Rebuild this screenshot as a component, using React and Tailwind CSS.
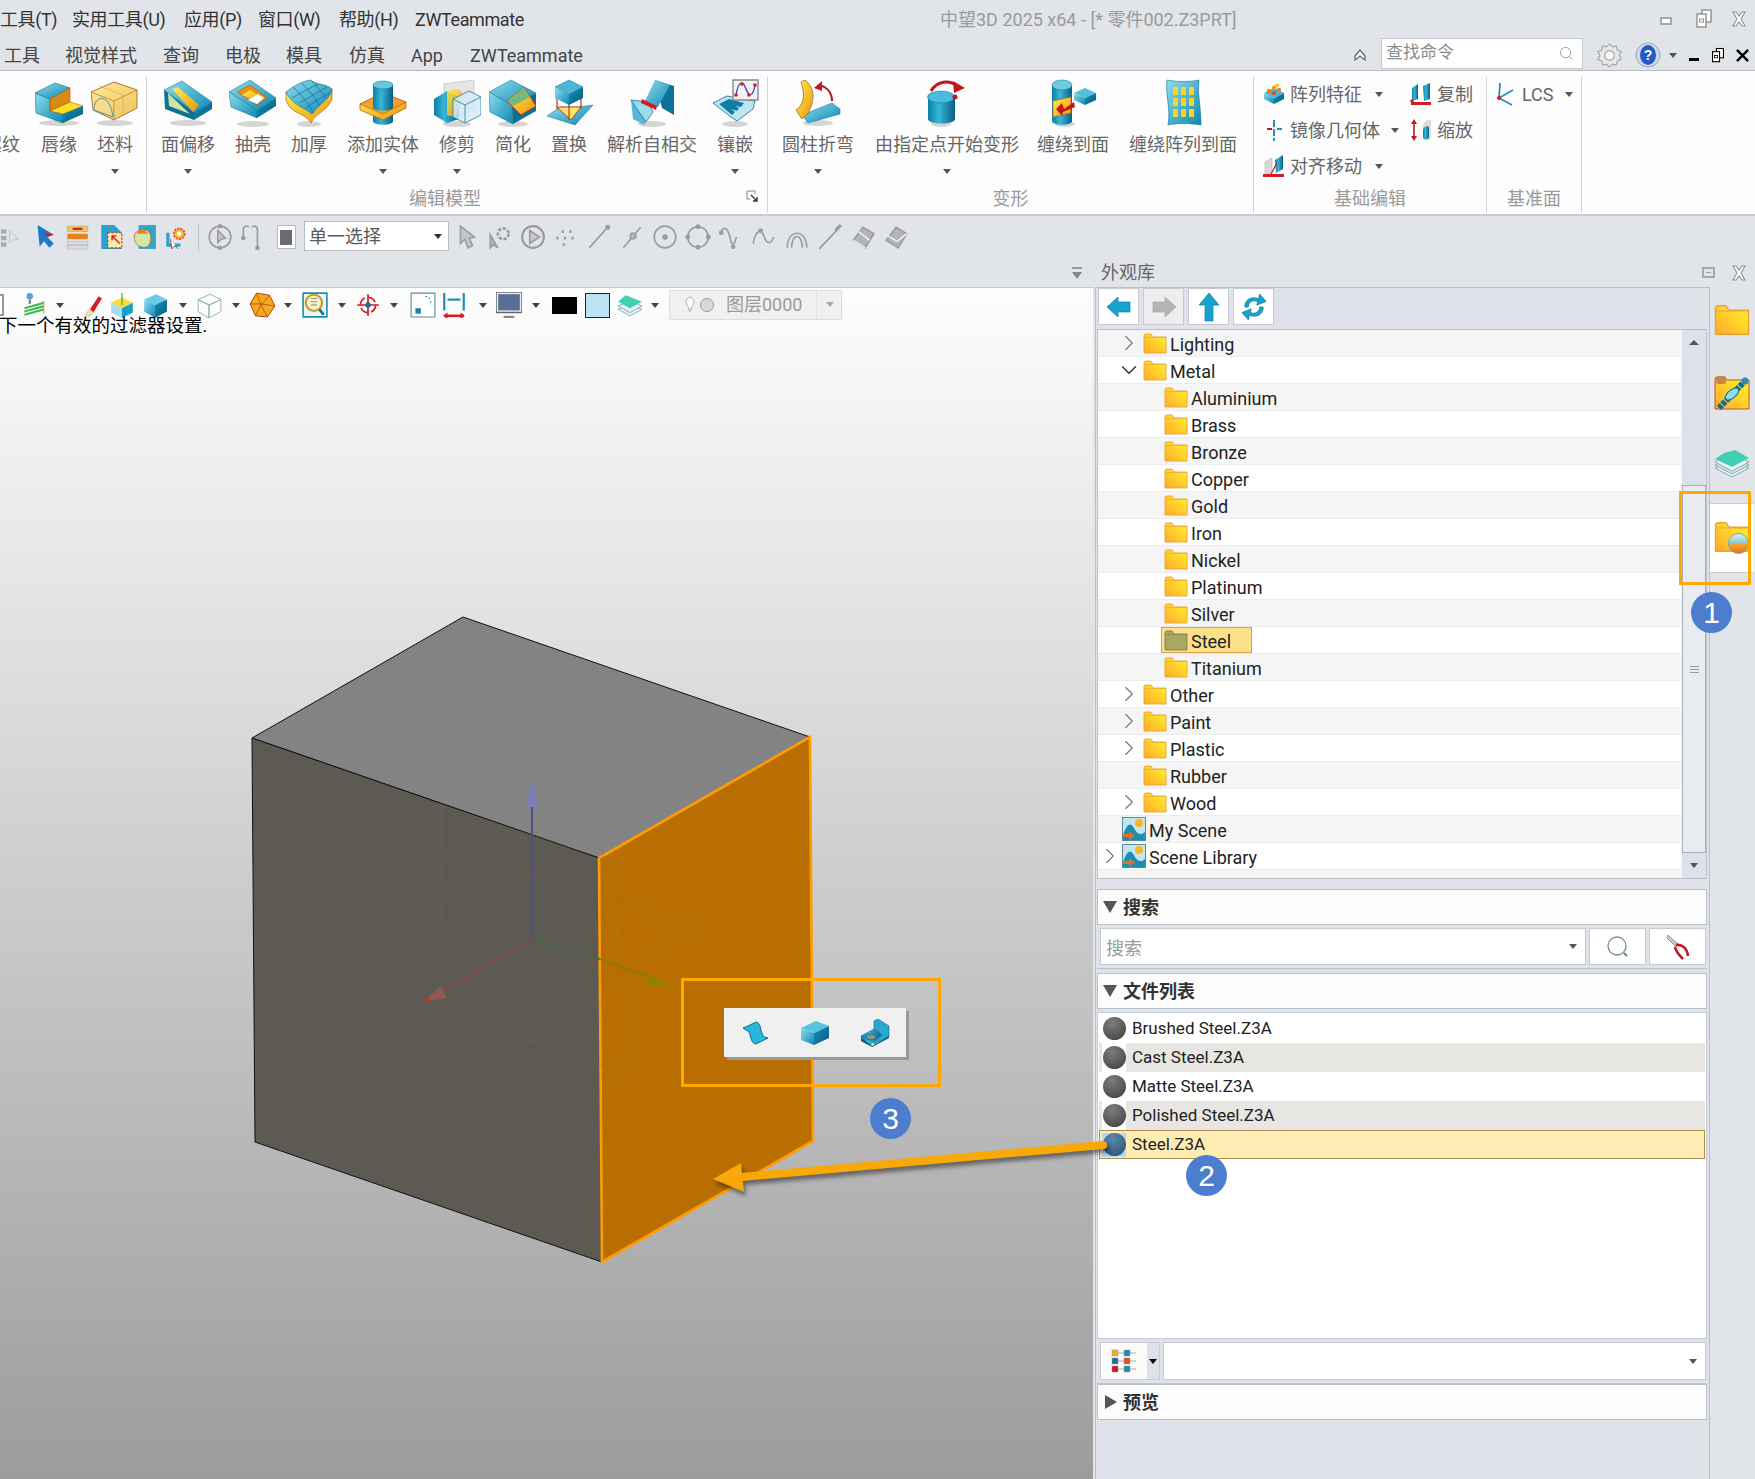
import { ChevronRight, ChevronDown } from 'lucide-react';

const Defs = () => (
  <svg className="absolute w-0 h-0">
    <defs>
      <linearGradient id="t" x1="0" y1="0" x2="1" y2="1">
        <stop offset="0" stopColor="#8fdcee" />
        <stop offset="1" stopColor="#0b89b3" />
      </linearGradient>
      <linearGradient id="td" x1="0" y1="0" x2="1" y2="1">
        <stop offset="0" stopColor="#1592b8" />
        <stop offset="1" stopColor="#07597c" />
      </linearGradient>
      <linearGradient id="cy" x1="0" y1="0" x2="1" y2="0">
        <stop offset="0" stopColor="#0a7ea6" />
        <stop offset="0.4" stopColor="#38b6d8" />
        <stop offset="1" stopColor="#075f82" />
      </linearGradient>
      <linearGradient id="g" x1="0" y1="0" x2="1" y2="1">
        <stop offset="0" stopColor="#fff04a" />
        <stop offset="1" stopColor="#ee9510" />
      </linearGradient>
      <linearGradient id="gl" x1="0" y1="0" x2="1" y2="1">
        <stop offset="0" stopColor="#fdeb98" />
        <stop offset="1" stopColor="#f0c458" />
      </linearGradient>
      <linearGradient id="f" x1="0" y1="1" x2="1" y2="0">
        <stop offset="0" stopColor="#ffa92b" />
        <stop offset="0.55" stopColor="#ffd32a" />
        <stop offset="1" stopColor="#fff42e" />
      </linearGradient>
    </defs>
  </svg>
);

const Ico = ({ children, size = 'w-[48px] h-[48px]', box = '0 0 48 48' }) => (
  <svg viewBox={box} className={`${size} shrink-0`} strokeLinejoin="round">
    {children}
  </svg>
);

const Shadow = ({ cx = 24, cy = 45, rx = 16 }) => <ellipse cx={cx} cy={cy} rx={rx} ry="3" fill="#777" opacity="0.3" />;

const LipIcon = () => (
  <Ico>
    <Shadow cy={44} rx={20} />
    <path d="M0 14L20 4L35 9L15 20Z" fill="url(#t)" stroke="#0b6f93" strokeWidth="0.6" />
    <path d="M0 14L15 20L15 32L28 35L28 44L1 34Z" fill="url(#t)" stroke="#0b6f93" strokeWidth="0.6" />
    <path d="M15 20L35 9L35 23L15 32Z" fill="#d98a12" stroke="#b5511e" strokeWidth="0.6" />
    <path d="M15 32L35 23L48 27L28 35Z" fill="#ffe01e" stroke="#b5511e" strokeWidth="0.6" />
    <path d="M28 35L48 27L48 35L28 44Z" fill="url(#td)" />
  </Ico>
);

const StockIcon = () => (
  <Ico>
    <Shadow cy={44} rx={18} />
    <path d="M23 3L46 11L46 29L23 41L2 31L0 13Z" fill="url(#gl)" stroke="#b5602a" strokeWidth="0.9" />
    <path d="M0 13L23 22L46 11M23 22L23 41" fill="none" stroke="#c07a38" strokeWidth="0.8" />
    <path d="M8 7L32 16L32 34" fill="none" stroke="#d9a860" strokeWidth="0.7" />
    <path d="M3 31C3 15 19 14 22 38M3 31L22 38" fill="#f6df9a" fillOpacity="0.6" stroke="#3f9aa8" strokeWidth="1" />
  </Ico>
);

const OffsetIcon = () => (
  <Ico>
    <Shadow cy={44} rx={18} />
    <path d="M18 2L48 23L30 33L0 11Z" fill="url(#t)" stroke="#0b6f93" strokeWidth="0.5" />
    <path d="M0 11L30 33L30 41L1 30Z" fill="#0d7095" />
    <path d="M4 14L5 27L26 35Z" fill="#cfe3a0" />
    <path d="M8 10L14 8L35 26L29 33Z" fill="url(#g)" />
    <path d="M30 33L48 23L48 30L30 41Z" fill="url(#td)" />
  </Ico>
);

const ShellIcon = () => (
  <Ico>
    <Shadow cy={45} rx={16} />
    <path d="M21 1L47 19L28 31L0 13Z" fill="url(#t)" stroke="#0b6f93" strokeWidth="0.5" />
    <path d="M8 13L21 6L38 19L28 26Z" fill="#e8900f" stroke="#b5511e" strokeWidth="0.6" />
    <path d="M13 16L21 11L34 19L28 23Z" fill="url(#g)" />
    <path d="M19 21L29 15L35 19L28 25Z" fill="#fff" />
    <path d="M0 13L28 31L28 39L2 28Z" fill="url(#t)" stroke="#0b6f93" strokeWidth="0.5" />
    <path d="M28 31L47 19L47 27L28 39Z" fill="url(#td)" />
  </Ico>
);

const ThickenIcon = () => (
  <Ico>
    <Shadow cy={45} rx={12} />
    <path d="M1 13L1 21C6 36 20 33 26 44C31 33 42 33 47 20L47 10Z" fill="url(#g)" stroke="#c2571c" strokeWidth="0.7" />
    <path d="M1 13C10 6 18 2 26 1C30 6 40 4 47 10C46 19 36 23 27 35C19 28 7 26 1 13Z" fill="url(#t)" stroke="#0b6f93" strokeWidth="0.6" />
    <path d="M8 8C16 16 24 24 28 34M17 4C24 12 32 20 34 27M27 2C32 8 38 14 41 19M7 19C16 14 26 8 34 5M14 24C24 19 32 13 42 8M21 29C28 24 36 18 45 14" fill="none" stroke="#0c6d90" strokeWidth="0.7" />
  </Ico>
);

const AddSolidIcon = () => (
  <Ico>
    <path d="M14 30H34V42C34 47 14 47 14 42Z" fill="url(#cy)" />
    <path d="M1 25L24 14L47 23L47 29L24 41L1 31Z" fill="url(#g)" stroke="#b5511e" strokeWidth="0.7" />
    <path d="M1 25L24 35L47 23L24 14Z" fill="#f1a22a" stroke="#b5511e" strokeWidth="0.6" />
    <path d="M14 6H34V28C34 33 14 33 14 28Z" fill="url(#cy)" />
    <ellipse cx="24" cy="6" rx="10" ry="4" fill="#67c8e2" stroke="#0b6f93" strokeWidth="0.5" />
  </Ico>
);

const TrimIcon = () => (
  <Ico>
    <Shadow cy={45} rx={14} />
    <path d="M11 5L41 1L41 30L12 45Z" fill="#d6d6d6" fillOpacity="0.6" stroke="#b5b5b5" strokeWidth="0.6" />
    <path d="M1 20L14 12L26 18L26 40L14 44L1 36Z" fill="url(#cy)" />
    <path d="M14 12C22 8 28 10 30 16L22 38L14 36Z" fill="url(#g)" opacity="0.85" />
    <path d="M20 20L36 12L48 18L48 36L32 44L20 38Z" fill="#d4eaf4" fillOpacity="0.85" stroke="#1f7ea0" strokeWidth="0.8" />
    <path d="M20 20L32 26L48 18M32 26L32 44" fill="none" stroke="#1f7ea0" strokeWidth="0.8" />
  </Ico>
);

const SimplifyIcon = () => (
  <Ico>
    <Shadow cy={45} rx={15} />
    <path d="M22 1L47 14L23 26L0 13Z" fill="url(#t)" stroke="#0b6f93" strokeWidth="0.5" />
    <path d="M0 13L23 26L24 45L1 33Z" fill="url(#t)" stroke="#0b6f93" strokeWidth="0.5" />
    <path d="M23 26L47 14L47 32L24 45Z" fill="#0c6f95" />
    <path d="M18 22L35 8L47 27L32 36Z" fill="url(#g)" stroke="#c1381c" strokeWidth="0.9" />
    <path d="M18 22L35 8L41 18L24 27Z" fill="#78b878" />
  </Ico>
);

const ReplaceIcon = () => (
  <Ico>
    <path d="M2 37L15 28L33 28L48 26L30 46Z" fill="url(#t)" stroke="#0b6f93" strokeWidth="0.5" />
    <path d="M12 28L36 28L26 41Z" fill="#ffe46a" stroke="#c1381c" strokeWidth="0.9" />
    <path d="M12 19V30M36 19V30M24 24V41" stroke="#c1381c" strokeWidth="1.2" />
    <path d="M24 1L38 8L24 15L10 8Z" fill="#4cb8d8" stroke="#0b6f93" strokeWidth="0.5" />
    <path d="M10 8L24 15V26L10 19Z" fill="url(#t)" />
    <path d="M24 15L38 8V19L24 26Z" fill="url(#td)" />
  </Ico>
);

const AnalyzeIcon = () => (
  <Ico size="w-[44px] h-[48px]" box="0 0 44 48">
    <Shadow cx={22} cy={45} rx={14} />
    <path d="M25 1L44 7V36L32 29Z" fill="#0c7197" />
    <path d="M25 1L40 6L28 28L15 22Z" fill="url(#t)" />
    <path d="M1 21L18 23L16 43Z" fill="#16789c" />
    <path d="M1 21L16 43L14 46L3 40Z" fill="#58b7d2" />
    <path d="M1 21L18 23L23 33L16 43Z" fill="#9bdcea" stroke="#0b6f93" strokeWidth="0.7" />
    <path d="M12 20L27 27L26 31L11 24Z" fill="#d8192a" />
  </Ico>
);

const InlayIcon = () => (
  <Ico>
    <Shadow cy={45} rx={13} />
    <path d="M2 24L16 17L32 20L44 22L42 30L26 42L20 38Z" fill="#bfe5ef" stroke="#1c7fa3" strokeWidth="0.9" />
    <path d="M8 25L18 20L33 24L30 28L24 27L28 29L26 32L20 30L24 33L21 36Z" fill="#0f7ea6" />
    <rect x="22" y="1" width="25" height="20" fill="#f2f2f2" stroke="#888" strokeWidth="1.4" />
    <path d="M25 16C28 0 32 2 35 10C38 18 42 18 44 6" fill="none" stroke="#2b3fb3" strokeWidth="1.3" />
    <circle cx="25" cy="16" r="1.8" fill="#d31c24" />
    <circle cx="31" cy="5" r="1.8" fill="#d31c24" />
    <circle cx="38" cy="16" r="1.8" fill="#d31c24" />
    <circle cx="44" cy="6" r="1.8" fill="#d31c24" />
  </Ico>
);

const BendIcon = () => (
  <Ico>
    <Shadow cx={24} cy={44} rx={15} />
    <path d="M8 36L38 24L46 30L46 35L14 44Z" fill="url(#t)" stroke="#0b6f93" strokeWidth="0.5" />
    <path d="M11 1C20 8 22 20 14 34L8 40L2 31C12 24 10 12 7 3Z" fill="url(#g)" stroke="#a8671a" strokeWidth="0.8" />
    <path d="M25 6C33 8 38 14 38 22" fill="none" stroke="#b71c25" strokeWidth="2.2" />
    <path d="M20 9L28 2L28 12Z" fill="#b71c25" />
  </Ico>
);

const DeformIcon = () => (
  <Ico>
    <Shadow cx={18} cy={45} rx={10} />
    <path d="M5 18H32V40C32 46 5 46 5 40Z" fill="url(#cy)" />
    <ellipse cx="18" cy="18" rx="13.5" ry="6" fill="#49bcdc" stroke="#0b6f93" strokeWidth="0.5" />
    <path d="M8 12C14 2 26 0 36 8" fill="none" stroke="#c4161f" strokeWidth="3" />
    <path d="M30 2L42 9L31 14Z" fill="#c4161f" />
    <circle cx="32" cy="18" r="2.5" fill="#c4161f" />
  </Ico>
);

const WrapIcon = () => (
  <Ico>
    <Shadow cx={16} cy={45} rx={10} />
    <path d="M3 6H23V42C23 47 3 47 3 42Z" fill="url(#cy)" />
    <ellipse cx="13" cy="6" rx="10" ry="5" fill="#6bcbe3" stroke="#0b6f93" strokeWidth="0.5" />
    <path d="M4 22L22 18L22 34L4 38Z" fill="url(#g)" stroke="#c2571c" strokeWidth="0.6" />
    <path d="M25 23L15 30L13 24L7 30L13 37L14 33L26 28Z" fill="#c4161f" />
    <path d="M36 9L47 14L36 19L25 14Z" fill="#58bedb" />
    <path d="M25 14L36 19V26L25 21Z" fill="url(#t)" />
    <path d="M36 19L47 14V21L36 26Z" fill="url(#td)" />
  </Ico>
);

const WrapArrayIcon = () => (
  <Ico size="w-[40px] h-[48px]" box="0 0 40 48">
    <path d="M4 1C14 3 28 3 36 1C34 14 38 26 38 46C26 44 14 44 5 46C8 30 2 14 4 1Z" fill="url(#t)" stroke="#0b6f93" strokeWidth="0.6" />
    {[10, 18, 26].map((x) =>
      [12, 23, 34].map((y) => <rect key={`${x}-${y}`} x={x} y={y - 4} width="5" height="8" fill="#ffd21f" />)
    )}
  </Ico>
);

const ArrayIcon = () => (
  <Ico size="w-[24px] h-[24px]" box="0 0 24 24">
    <path d="M2 11L12 6L22 11L12 16Z" fill="#48b6d6" />
    <path d="M2 11L12 16V22L2 17Z" fill="url(#t)" />
    <path d="M12 16L22 11V17L12 22Z" fill="url(#td)" />
    <circle cx="7" cy="9" r="2.2" fill="#e8821c" /><circle cx="12" cy="6" r="2.2" fill="#f0a020" /><circle cx="17" cy="8" r="2.2" fill="#e8821c" />
    <circle cx="12" cy="11" r="2.2" fill="#d9541e" /><circle cx="15" cy="3.5" r="2" fill="#ffc22e" />
  </Ico>
);

const MirrorIcon = () => (
  <Ico size="w-[24px] h-[24px]" box="0 0 24 24">
    <path d="M12 2V23" stroke="#2b8db0" strokeWidth="2" strokeDasharray="7 2" />
    <path d="M5 11H10" stroke="#c4161f" strokeWidth="2" />
    <path d="M15 11H20" stroke="#2b8db0" strokeWidth="2" />
  </Ico>
);

const AlignIcon = () => (
  <Ico size="w-[24px] h-[24px]" box="0 0 24 24">
    <path d="M3 8L10 4V18L3 21Z" fill="#d8d8d8" stroke="#aaa" strokeWidth="0.5" />
    <path d="M13 6L21 1V15L14 19Z" fill="url(#cy)" />
    <path d="M9 20L15 9" stroke="#c4161f" strokeWidth="1.2" />
    <path d="M1 20H22V23H1Z" fill="#d31c24" />
  </Ico>
);

const CopyIcon = () => (
  <Ico size="w-[24px] h-[24px]" box="0 0 24 24">
    <path d="M3 6L9 2V17L3 19Z" fill="url(#cy)" />
    <path d="M14 4L21 1V17L15 19Z" fill="url(#cy)" />
    <path d="M2 20H22V23H2Z" fill="#d31c24" />
    <circle cx="3" cy="19" r="1.8" fill="#d31c24" />
  </Ico>
);

const ScaleIcon = () => (
  <Ico size="w-[24px] h-[24px]" box="0 0 24 24">
    <path d="M5 5V20" stroke="#c4161f" strokeWidth="1.6" />
    <path d="M5 1L8 6H2ZM5 23L8 18H2Z" fill="#c4161f" />
    <path d="M14 8C14 3 22 0 22 3V19C22 23 14 24 14 20Z" fill="#dcdcdc" />
    <path d="M14 12C14 8 20 7 20 10V19C20 22 14 22 14 19Z" fill="url(#cy)" />
  </Ico>
);

const LcsIcon = () => (
  <Ico size="w-[22px] h-[24px]" box="0 0 22 24">
    <path d="M3 16L4 1M3 16L17 8M3 16L16 23" fill="none" stroke="#2b8db0" strokeWidth="1.8" />
    <circle cx="3" cy="16" r="2" fill="#d31c24" />
  </Ico>
);

const Caret = ({ color = 'border-t-[#555]' }) => (
  <span className={`inline-block w-0 h-0 border-x-[4px] border-x-transparent border-t-[5px] ${color}`} />
);

const XGlyph = ({ size = 'w-[18px] h-[18px]' }) => (
  <svg viewBox="0 0 18 18" className={size}>
    <path d="M3 2L6 2L9 6L12 2L15 2L11 9L15 16L12 16L9 12L6 16L3 16L7 9Z" fill="#fff" stroke="#8f8f8f" strokeWidth="1.1" />
  </svg>
);

const RestoreGlyph = ({ stroke = '#8f8f8f', size = 'w-[18px] h-[20px]' }) => (
  <svg viewBox="0 0 18 20" className={size}>
    <rect x="7" y="1" width="9" height="12" fill="#fff" stroke={stroke} strokeWidth="1.4" />
    <rect x="2" y="5" width="9" height="13" fill="#fff" stroke={stroke} strokeWidth="1.4" />
    <rect x="4.5" y="10" width="4" height="3" fill="none" stroke={stroke} />
  </svg>
);

function TitleBar() {
  const menus = [
    ['工具(T)', 'w-[72px]'],
    ['实用工具(U)', 'w-[112px]'],
    ['应用(P)', 'w-[74px]'],
    ['窗口(W)', 'w-[81px]'],
    ['帮助(H)', 'w-[76px]'],
    ['ZWTeammate', 'w-[115px]'],
  ];
  return (
    <div className="h-[36px] pt-[2px] flex items-center text-[18px] text-[#333]">
      {menus.map(([m, w]) => (
        <div key={m} className={`${w} whitespace-nowrap tracking-[-0.4px]`}>{m}</div>
      ))}
      <div className="ml-[410px] w-[700px] text-[#9a9a9a] whitespace-nowrap">中望3D 2025 x64 - [* 零件002.Z3PRT]</div>
      <div className="w-[12px] h-[8px] border-2 border-[#a8a8a8] bg-white mt-[4px] ml-[20px]" />
      <div className="ml-[23px]"><RestoreGlyph /></div>
      <div className="ml-[17px]"><XGlyph /></div>
    </div>
  );
}

function TabRow() {
  const tabs = [
    ['工具', 'w-[61px]'],
    ['视觉样式', 'w-[98px]'],
    ['查询', 'w-[62px]'],
    ['电极', 'w-[61px]'],
    ['模具', 'w-[63px]'],
    ['仿真', 'w-[62px]'],
    ['App', 'w-[59px]'],
    ['ZWTeammate', 'w-[115px]'],
  ];
  return (
    <div className="h-[35px] pt-[4px] flex items-center text-[18px] text-[#444] border-b border-[#b4bac1]">
      <div className="w-[4px]" />
      {tabs.map(([m, w]) => (
        <div key={m} className={`${w} whitespace-nowrap`}>{m}</div>
      ))}
      <svg viewBox="0 0 14 14" className="w-[14px] h-[14px] ml-[768px]">
        <path d="M2 12V8L7 2L12 8V12L7 8Z" fill="#fff" stroke="#666" strokeWidth="1.3" />
      </svg>
      <div className="ml-[14px] w-[202px] h-[31px] -mt-[4px] bg-white border border-[#c3c8ce] flex items-center justify-between pl-[4px] pr-[8px]">
        <span className="text-[17px] text-[#8a8a8a]">查找命令</span>
        <svg viewBox="0 0 16 16" className="w-[15px] h-[15px]">
          <circle cx="7" cy="7" r="5.5" fill="none" stroke="#999" />
          <path d="M11 11L14 14" stroke="#6aa" />
        </svg>
      </div>
      <svg viewBox="0 0 26 26" className="w-[25px] h-[25px] ml-[14px]">
        <path d="M13 1L16 4L20 3L21 7L25 9L23 13L25 17L21 19L20 23L16 22L13 25L10 22L6 23L5 19L1 17L3 13L1 9L5 7L6 3L10 4Z" fill="#e8e8e8" stroke="#a5a5a5" strokeWidth="1.2" />
        <circle cx="13" cy="13" r="5" fill="#f6f6f6" stroke="#a5a5a5" strokeWidth="1.2" />
      </svg>
      <svg viewBox="0 0 26 26" className="w-[26px] h-[26px] ml-[13px]">
        <circle cx="13" cy="13" r="12" fill="#cfd8ea" stroke="#9aa6bd" />
        <ellipse cx="13" cy="13" rx="8" ry="10" fill="#2459c6" />
        <text x="13" y="18" textAnchor="middle" fontSize="14" fontWeight="700" fill="#fff" fontFamily="Liberation Sans">?</text>
      </svg>
      <div className="ml-[8px] flex items-center"><Caret /></div>
      <div className="ml-[12px] w-[10px] h-[3px] bg-black mt-[9px]" />
      <div className="ml-[12px]"><RestoreGlyph stroke="#000" size="w-[14px] h-[17px]" /></div>
      <svg viewBox="0 0 14 14" className="w-[13px] h-[13px] ml-[11px]">
        <path d="M1 1L13 13M13 1L1 13" stroke="#000" strokeWidth="2.6" />
      </svg>
    </div>
  );
}

function Tool({ w, label, icon, drop }) {
  return (
    <div className={`${w} flex flex-col items-center pt-[1px] shrink-0`}>
      <div className="h-[50px] flex items-center justify-center">{icon}</div>
      <div className="mt-[5px] h-[24px] leading-[24px] text-[18px] text-[#666] whitespace-nowrap">{label}</div>
      {drop && <div className="mt-[12px] leading-none flex"><Caret /></div>}
    </div>
  );
}

const GroupLabel = ({ children, extra = '' }) => (
  <div className={`h-[24px] leading-[24px] text-center text-[18px] text-[#9a9a9a] ${extra}`}>{children}</div>
);

const MiniTool = ({ icon, label, pad, caret, gap }) => (
  <div className={`h-[36px] flex items-center ${pad}`}>
    {icon}
    <span className="ml-[4px] text-[18px] text-[#666] whitespace-nowrap">{label}</span>
    {caret && <span className={`flex ${gap}`}><Caret /></span>}
  </div>
);

function Ribbon() {
  return (
    <div className="h-[145px] bg-[#fdfdfd] border-b-2 border-[#c8ccd1] pt-[6px] flex">
      <div className="-ml-[30px] w-[177px] h-[136px] border-r border-[#d5d5d5] flex flex-col shrink-0">
        <div className="flex h-[112px]">
          <Tool w="w-[64px]" label="螺纹" icon={<div className="w-[48px]" />} />
          <Tool w="w-[50px]" label="唇缘" icon={<LipIcon />} />
          <Tool w="w-[62px]" label="坯料" icon={<StockIcon />} drop />
        </div>
      </div>
      <div className="w-[621px] h-[136px] border-r border-[#d5d5d5] flex flex-col shrink-0 relative">
        <div className="flex h-[110px]">
          <Tool w="w-[82px]" label="面偏移" icon={<OffsetIcon />} drop />
          <Tool w="w-[48px]" label="抽壳" icon={<ShellIcon />} />
          <Tool w="w-[64px]" label="加厚" icon={<ThickenIcon />} />
          <Tool w="w-[84px]" label="添加实体" icon={<AddSolidIcon />} drop />
          <Tool w="w-[64px]" label="修剪" icon={<TrimIcon />} drop />
          <Tool w="w-[48px]" label="简化" icon={<SimplifyIcon />} />
          <Tool w="w-[64px]" label="置换" icon={<ReplaceIcon />} />
          <Tool w="w-[102px]" label="解析自相交" icon={<AnalyzeIcon />} />
          <Tool w="w-[64px]" label="镶嵌" icon={<InlayIcon />} drop />
        </div>
        <GroupLabel extra="pr-[24px]">编辑模型</GroupLabel>
        <svg viewBox="0 0 12 12" className="absolute right-[9px] top-[113px] w-[12px] h-[12px]">
          <path d="M1 1H9V4M1 1V9H4" fill="none" stroke="#888" />
          <path d="M5 5L11 11M11 7V11H7" fill="none" stroke="#333" strokeWidth="1.4" />
        </svg>
      </div>
      <div className="w-[486px] h-[136px] border-r border-[#d5d5d5] flex flex-col shrink-0">
        <div className="flex h-[110px]">
          <Tool w="w-[100px]" label="圆柱折弯" icon={<BendIcon />} drop />
          <Tool w="w-[158px]" label="由指定点开始变形" icon={<DeformIcon />} drop />
          <Tool w="w-[94px]" label="缠绕到面" icon={<WrapIcon />} />
          <Tool w="w-[126px]" label="缠绕阵列到面" icon={<WrapArrayIcon />} />
        </div>
        <GroupLabel>变形</GroupLabel>
      </div>
      <div className="w-[233px] h-[136px] border-r border-[#d5d5d5] flex flex-col shrink-0">
        <div className="flex h-[110px] -mt-[1px]">
          <div className="w-[152px]">
            <MiniTool pad="pl-[8px]" icon={<ArrayIcon />} label="阵列特征" caret gap="ml-[13px]" />
            <MiniTool pad="pl-[8px]" icon={<MirrorIcon />} label="镜像几何体" caret gap="ml-[11px]" />
            <MiniTool pad="pl-[8px]" icon={<AlignIcon />} label="对齐移动" caret gap="ml-[13px]" />
          </div>
          <div>
            <MiniTool pad="pl-[3px]" icon={<CopyIcon />} label="复制" />
            <MiniTool pad="pl-[3px]" icon={<ScaleIcon />} label="缩放" />
          </div>
        </div>
        <GroupLabel extra="mt-[1px]">基础编辑</GroupLabel>
      </div>
      <div className="w-[95px] h-[136px] border-r border-[#d5d5d5] flex flex-col shrink-0">
        <div className="h-[110px] -mt-[1px]">
          <MiniTool pad="pl-[9px]" icon={<LcsIcon />} label="LCS" caret gap="ml-[11px]" />
        </div>
        <GroupLabel extra="mt-[1px]">基准面</GroupLabel>
      </div>
    </div>
  );
}

const Gray = ({ children }) => (
  <svg viewBox="0 0 24 24" className="w-[26px] h-[26px]" fill="none" stroke="#9c9c9c" strokeWidth="1.5">
    {children}
  </svg>
);

const Small = ({ children }) => (
  <svg viewBox="0 0 24 24" className="w-[26px] h-[26px] shrink-0" strokeLinejoin="round">
    {children}
  </svg>
);

const Slot = ({ w, children }) => <div className={`${w} shrink-0 flex items-center justify-center`}>{children}</div>;

function QuickBar() {
  const gray = [
    <g key="1"><path d="M6 2L6 18L10 14L13 22L17 20L14 13L19 12Z" fill="#c8c8c8" /></g>,
    <g key="2"><circle cx="15" cy="9" r="5" strokeDasharray="3 1.5" strokeWidth="2.5" /><path d="M3 10V22L6 19L10 22Z" fill="#b5b5b5" /></g>,
    <g key="3"><circle cx="12" cy="12" r="10" strokeWidth="2" /><path d="M9 6L18 12L9 18Z" fill="#c8c8c8" /></g>,
    <g key="4" strokeWidth="2.4" strokeDasharray="2 5"><path d="M3 13H21M8 7H18M9 19H14" /></g>,
    <g key="5"><path d="M3 22L20 3" /><circle cx="20" cy="3" r="1.6" fill="#9c9c9c" /></g>,
    <g key="6"><path d="M4 22L20 3" /><circle cx="13" cy="11" r="2.6" fill="#bbb" /></g>,
    <g key="7"><circle cx="12" cy="12" r="10" /><circle cx="12" cy="12" r="1.8" fill="#9c9c9c" /></g>,
    <g key="8"><circle cx="12" cy="12" r="9.5" /><circle cx="12" cy="2.5" r="1.5" fill="#9c9c9c" /><circle cx="2.5" cy="12" r="1.5" fill="#9c9c9c" /><circle cx="21.5" cy="12" r="1.5" fill="#9c9c9c" /><circle cx="12" cy="21.5" r="1.5" fill="#9c9c9c" /></g>,
    <g key="9"><path d="M2 10C5 0 9 4 11 12C13 22 15 20 17 12" /><circle cx="3" cy="8" r="1.4" fill="#9c9c9c" /><circle cx="14" cy="21" r="1.4" fill="#9c9c9c" /></g>,
    <g key="10"><path d="M2 18C4 6 9 4 12 11C14 18 18 20 21 12" /><circle cx="9" cy="6" r="1.4" fill="#9c9c9c" /></g>,
    <g key="11"><path d="M3 22C3 4 21 4 21 22M7 22C7 8 17 8 17 22" /></g>,
    <g key="12"><path d="M2 23L19 5" /><path d="M17 6L22 1" strokeWidth="3" /></g>,
    <g key="13"><path d="M12 3L22 9L14 22L3 15Z" fill="#b5b5b5" /><path d="M3 15L14 22M8 7L18 15" stroke="#eee" /></g>,
    <g key="14"><path d="M12 3L22 9L14 22L3 15Z" fill="#b5b5b5" /><path d="M3 10L13 16L22 9" stroke="#eee" /></g>,
  ];
  return (
    <div className="h-[42px] flex items-center">
      <Slot w="w-[27px]"><Small><rect x="0" y="5" width="5" height="4" fill="#aaa" /><rect x="0" y="11" width="5" height="4" fill="#aaa" /><rect x="0" y="17" width="5" height="4" fill="#aaa" /><path d="M8 6L8 18L11 15L16 14Z" fill="#e4e4e4" stroke="#bbb" strokeWidth="0.7" /></Small></Slot>
      <Slot w="w-[33px]"><Small><path d="M6 1L8 21L12 16L17 22L21 18L15 12L21 10Z" fill="#1d78c8" /><path d="M12 8L15 12L21 10Z" fill="#d31c24" /></Small></Slot>
      <Slot w="w-[34px]"><Small><rect x="3" y="2" width="19" height="5" fill="#f0c458" stroke="#b98" strokeWidth="0.5" /><path d="M8 4.5H17" stroke="#d31c24" strokeWidth="2" /><rect x="3" y="9" width="19" height="5" fill="#e8821c" /><rect x="3" y="16" width="19" height="3" fill="#ddd" stroke="#aaa" strokeWidth="0.5" /><rect x="3" y="20" width="19" height="3" fill="#ddd" stroke="#aaa" strokeWidth="0.5" /></Small></Slot>
      <Slot w="w-[33px]"><Small><path d="M3 1H15L22 8V23H3Z" fill="#28a2cc" /><rect x="9" y="8" width="13" height="14" fill="#fbe9a8" stroke="#d31c24" strokeDasharray="2 1.5" /><path d="M13 11L20 18M17 11H13V15" fill="none" stroke="#d31c24" strokeWidth="1.3" /></Small></Slot>
      <Slot w="w-[33px]"><Small><rect x="7" y="1" width="16" height="22" fill="#37a5c8" /><path d="M3 12C3 6 10 4 15 6C20 9 19 18 15 21C9 23 3 19 3 12Z" fill="#d3e8a8" stroke="#b5601a" strokeWidth="0.7" /><path d="M5 9H16L12 5H8Z" fill="#e8821c" /></Small></Slot>
      <Slot w="w-[32px]"><Small><path d="M3 8H6V18H16V21H3Z" fill="#28a2cc" /><circle cx="15" cy="9" r="5" fill="#f3b42e" stroke="#d9541e" strokeDasharray="2 1" strokeWidth="1.5" /><circle cx="15" cy="9" r="2" fill="#fff" /><path d="M7 14L8 23L11 20L14 23" fill="#fff" stroke="#c4161f" strokeWidth="0.8" /></Small></Slot>
      <div className="w-[12px] flex justify-center"><div className="w-px h-[28px] bg-[#bcc2c8]" /></div>
      <Slot w="w-[32px]"><Gray><circle cx="12" cy="12" r="10" /><path d="M10 6L10 17L13 14L17 13Z" fill="#c8c8c8" /><circle cx="12" cy="2" r="1.3" fill="#9c9c9c" /><circle cx="12" cy="22" r="1.3" fill="#9c9c9c" /></Gray></Slot>
      <Slot w="w-[32px]"><Gray><path d="M4 13V5C4 2 8 1 9 3M17 22V5C17 2 13 1 12 3" /><circle cx="4" cy="13" r="1.4" fill="#9c9c9c" /><circle cx="17" cy="22" r="1.4" fill="#9c9c9c" /></Gray></Slot>
      <Slot w="w-[36px]">
        <div className="w-[19px] h-[24px] bg-white border border-[#bbb] flex items-center justify-center"><div className="w-[12px] h-[15px] bg-[#6b6b6b]" /></div>
      </Slot>
      <div className="w-[145px] h-[30px] bg-white border border-[#b9bec4] shrink-0 flex items-center justify-between pl-[4px] pr-[6px] -mt-[2px]">
        <span className="text-[18px] text-[#5a5a5a]">单一选择</span>
        <Caret color="border-t-[#333]" />
      </div>
      <div className="w-[1px]" />
      {gray.map((g) => (
        <Slot key={g.key} w="w-[33px]"><Gray>{g}</Gray></Slot>
      ))}
    </div>
  );
}

const Folder = ({ size = 'w-[24px] h-[21px]', dim }) => (
  <svg viewBox="0 0 24 21" className={`${size} shrink-0`}>
    <path d="M1 20V2.5Q1 1 3 1H8L10 4H23V20Z" fill={dim ? '#a8a860' : 'url(#f)'} stroke={dim ? '#7d8050' : '#eaa238'} strokeWidth="0.9" />
    <path d="M1 4.5H23" stroke={dim ? '#7d8050' : '#eaa238'} strokeWidth="0.6" />
  </svg>
);

const SceneIcon = () => (
  <svg viewBox="0 0 24 24" className="w-[24px] h-[24px] shrink-0">
    <rect x="0.5" y="0.5" width="23" height="23" fill="#c4e6ef" stroke="#5b8a9a" />
    <path d="M1 18C5 6 9 4 13 13C16 18 20 18 23 15V23H1Z" fill="#1a8fb2" />
    <circle cx="17" cy="6" r="4" fill="#f6b921" />
    <path d="M1 17H7V14L13 18.5L7 23V20H1Z" fill="#ee6b25" />
  </svg>
);

const Row = ({ odd, children }) => (
  <div className={`h-[27px] flex items-center border-b border-[#ececec] text-[18px] text-[#222] ${odd ? 'bg-[#f5f5f5]' : 'bg-white'}`}>
    {children}
  </div>
);

const Chevron = ({ open }) =>
  open ? (
    <ChevronDown size={26} strokeWidth={1.3} color="#333" className="shrink-0" />
  ) : (
    <ChevronRight size={26} strokeWidth={1.05} color="#777" className="shrink-0" />
  );

function Tree() {
  const rows = [
    ['Lighting', 1, 'c'],
    ['Metal', 1, 'o'],
    ['Aluminium', 2],
    ['Brass', 2],
    ['Bronze', 2],
    ['Copper', 2],
    ['Gold', 2],
    ['Iron', 2],
    ['Nickel', 2],
    ['Platinum', 2],
    ['Silver', 2],
    ['Steel', 2, 's'],
    ['Titanium', 2],
    ['Other', 1, 'c'],
    ['Paint', 1, 'c'],
    ['Plastic', 1, 'c'],
    ['Rubber', 1],
    ['Wood', 1, 'c'],
    ['My Scene', 0],
    ['Scene Library', 0, 'c'],
  ];
  return (
    <div className="h-[550px] ml-[1px] mr-[2px] border border-[#b8c0c8] bg-[#f5f5f5] flex overflow-hidden">
      <div className="w-[583px] shrink-0">
        {rows.map(([name, level, kind], i) => (
          <Row key={name} odd={i % 2 === 0}>
            {level === 0 && (
              <>
                <div className="w-[24px] flex justify-center">{kind === 'c' && <Chevron />}</div>
                <SceneIcon />
                <span className="ml-[3px] pt-[2px]">{name}</span>
              </>
            )}
            {level === 1 && (
              <>
                <div className="w-[45px] flex justify-end pr-[1px]">{kind && <Chevron open={kind === 'o'} />}</div>
                <Folder />
                <span className="ml-[3px] pt-[2px]">{name}</span>
              </>
            )}
            {level === 2 && kind !== 's' && (
              <>
                <div className="w-[66px]" />
                <Folder />
                <span className="ml-[3px] pt-[2px]">{name}</span>
              </>
            )}
            {kind === 's' && (
              <>
                <div className="w-[63px]" />
                <div className="h-[26px] w-[91px] flex items-center pl-[2px] bg-[#ffe08a] border border-[#e0a040]">
                  <Folder dim />
                  <span className="ml-[3px] pt-[2px]">{name}</span>
                </div>
              </>
            )}
          </Row>
        ))}
      </div>
      <div className="w-[24px] ml-[1px] bg-[#dde2ea] flex flex-col items-center relative">
        <div className="h-[155px] w-full pt-[10px] flex justify-center">
          <span className="inline-block w-0 h-0 border-x-[5px] border-x-transparent border-b-[5px] border-b-[#555]" />
        </div>
        <div className="h-[368px] w-full bg-[#e8ebf0] border border-[#a9b0ba] flex items-center justify-center">
          <div className="w-[9px] h-[7px] border-y border-[#999] flex items-center"><div className="w-full h-px bg-[#999]" /></div>
        </div>
        <div className="pt-[10px] flex justify-center"><Caret /></div>
      </div>
    </div>
  );
}

const SectionHead = ({ label, open }) => (
  <div className="h-[36px] ml-[1px] mr-[2px] bg-[#fcfcfc] border border-[#b8c0c8] flex items-center pl-[5px]">
    {open ? (
      <span className="inline-block w-0 h-0 border-x-[7px] border-x-transparent border-t-[12px] border-t-[#555]" />
    ) : (
      <span className="inline-block w-0 h-0 border-y-[7px] border-y-transparent border-l-[12px] border-l-[#555] ml-[2px]" />
    )}
    <span className="ml-[6px] text-[18px] font-semibold text-[#333]">{label}</span>
  </div>
);

function FileList() {
  const files = ['Brushed Steel.Z3A', 'Cast Steel.Z3A', 'Matte Steel.Z3A', 'Polished Steel.Z3A'];
  return (
    <div className="h-[327px] mt-[3px] ml-[1px] mr-[2px] bg-white border border-[#c5cbd2] p-[1px] text-[17px] text-[#222]">
      {files.map((f, i) => (
        <div key={f} className={`h-[29px] flex items-center pl-[3px] ${i % 2 ? 'bg-[#e8e6e3]' : 'bg-white'}`}>
          <div className="w-[24px] h-[29px] bg-white flex items-center justify-center">
            <div className="w-[23px] h-[23px] rounded-full bg-[radial-gradient(circle_at_40%_25%,#7d7d7b,#3d3d3b)]" />
          </div>
          <span className="ml-[6px]">{f}</span>
        </div>
      ))}
      <div className="h-[29px] flex items-center pl-[2px] bg-[#fdedb3] border border-[#b08a4e]">
        <div className="w-[24px] h-[24px] bg-[#b6d8f2] flex items-center justify-center">
          <div className="w-[23px] h-[23px] rounded-full bg-[radial-gradient(circle_at_40%_25%,#5a88aa,#2b4f70)]" />
        </div>
        <span className="ml-[6px]">Steel.Z3A</span>
      </div>
    </div>
  );
}

function Panel() {
  return (
    <div className="w-[615px] ml-[2px] shrink-0 border-x border-t border-[#b8c0c8] bg-[#dfe3e9] flex flex-col">
      <div className="h-[41px] flex gap-[4px] pl-[2px]">
        {[0, 1, 2, 3].map((i) => (
          <div key={i} className={`w-[41px] h-[37px] border border-[#c6cbd1] flex items-center justify-center ${i === 1 ? 'bg-[#eeeeee]' : 'bg-white'}`}>
            {i === 0 && <svg viewBox="0 0 26 22" className="w-[26px] h-[22px]"><path d="M1 11L12 1V6H24V16H12V21Z" fill="#16a4cf" stroke="#0e7ea6" strokeWidth="0.7" /></svg>}
            {i === 1 && <svg viewBox="0 0 26 22" className="w-[26px] h-[22px]"><path d="M25 11L14 1V6H2V16H14V21Z" fill="#b5b5b5" stroke="#a0a0a0" strokeWidth="0.7" /></svg>}
            {i === 2 && <svg viewBox="0 0 22 30" className="w-[22px] h-[30px]"><path d="M11 1L21 13H15V29H7V13H1Z" fill="#16a4cf" stroke="#0e7ea6" strokeWidth="0.7" /></svg>}
            {i === 3 && <svg viewBox="0 0 28 30" className="w-[26px] h-[30px]"><path d="M4 15C4 7 11 3 19 6L20 1L27 9L17 13L18 9C12 7 8 10 8 15Z" fill="#16a4cf" stroke="#0b6f93" strokeWidth="0.7" /><path d="M24 15C24 23 17 27 9 24L8 29L1 21L11 17L10 21C16 23 20 20 20 15Z" fill="#16a4cf" stroke="#0b6f93" strokeWidth="0.7" /></svg>}
          </div>
        ))}
      </div>
      <Tree />
      <div className="h-[10px] shrink-0" />
      <SectionHead label="搜索" open />
      <div className="h-[44px] ml-[1px] mr-[2px] pt-[3px] pl-[3px] flex gap-[3px] border-b border-[#b8c0c8]">
        <div className="w-[486px] h-[37px] bg-white border border-[#c5cbd2] flex items-center justify-between pl-[5px] pr-[8px]">
          <span className="text-[18px] text-[#9a9a9a] pt-[3px]">搜索</span>
          <Caret />
        </div>
        <div className="w-[57px] h-[37px] bg-white border border-[#c5cbd2] flex items-center justify-center">
          <svg viewBox="0 0 24 24" className="w-[24px] h-[24px]"><circle cx="11" cy="11" r="9" fill="none" stroke="#888" strokeWidth="1.3" /><path d="M18 18L21 21" stroke="#3a8fb0" strokeWidth="2" /></svg>
        </div>
        <div className="w-[57px] h-[37px] bg-white border border-[#c5cbd2] flex items-center justify-center">
          <svg viewBox="0 0 26 26" className="w-[26px] h-[26px]"><path d="M3 1L13 10L11 13L2 4Z" fill="#c9c9c9" stroke="#777" strokeWidth="0.7" /><path d="M11 11C17 10 22 14 23 22" fill="none" stroke="#c4161f" strokeWidth="2.6" /><path d="M10 13C11 18 14 21 18 25" fill="none" stroke="#c4161f" strokeWidth="2.6" /></svg>
        </div>
      </div>
      <div className="h-[4px] shrink-0" />
      <SectionHead label="文件列表" open />
      <FileList />
      <div className="h-[45px] ml-[1px] mr-[2px] pt-[3px] pl-[3px] flex gap-[3px] border-b border-[#c0c6cd]">
        <div className="w-[60px] h-[38px] border border-[#c5cbd2] flex">
          <div className="w-[46px] bg-[#fbfbfb] flex items-center justify-center">
            <svg viewBox="0 0 26 26" className="w-[26px] h-[26px]">
              <rect x="1" y="2" width="6" height="6" fill="#f3a920" stroke="#999" strokeWidth="0.5" /><rect x="13" y="2" width="6" height="6" fill="#1a8fb2" stroke="#999" strokeWidth="0.5" />
              <rect x="1" y="10" width="6" height="6" fill="#1a6f92" stroke="#999" strokeWidth="0.5" /><rect x="13" y="10" width="6" height="6" fill="#d9541e" stroke="#999" strokeWidth="0.5" />
              <rect x="1" y="18" width="6" height="6" fill="#c4161f" stroke="#999" strokeWidth="0.5" /><rect x="13" y="18" width="6" height="6" fill="#1a8fb2" stroke="#999" strokeWidth="0.5" />
              <path d="M7 5H13M19 5H25M7 13H13M19 13H25M7 21H13M19 21H25" stroke="#aaa" />
            </svg>
          </div>
          <div className="flex-1 bg-[#dde2ea] flex items-center justify-center"><Caret color="border-t-black" /></div>
        </div>
        <div className="w-[543px] h-[38px] bg-white border border-[#c5cbd2] flex items-center justify-end pr-[8px]"><Caret /></div>
      </div>
      <SectionHead label="预览" />
    </div>
  );
}

function SideTabs() {
  return (
    <div className="w-[44px] shrink-0 flex flex-col pt-[17px]">
      <div className="pl-[4px] h-[71px]"><Folder size="w-[36px] h-[32px]" /></div>
      <div className="pl-[4px] h-[74px]">
        <svg viewBox="0 0 36 36" className="w-[36px] h-[36px]">
          <path d="M1 34V5Q1 2 3 2H11L13 5H35V34Z" fill="url(#f)" stroke="#c2571c" strokeWidth="1" />
          <rect x="2" y="1" width="10" height="8" rx="2" fill="#c4884c" />
          <path d="M5 33L30 7" stroke="#0f6d92" strokeWidth="6" strokeDasharray="4 1" />
          <ellipse cx="18" cy="19" rx="8" ry="4" fill="#8fdcee" stroke="#0b6f93" transform="rotate(-40 18 19)" />
          <circle cx="31" cy="6" r="3.5" fill="#2b8db0" />
        </svg>
      </div>
      <div className="pl-[4px] h-[54px]">
        <svg viewBox="0 0 36 30" className="w-[36px] h-[30px]">
          <path d="M1 19L18 28L35 19L18 11Z" fill="#eef4f6" stroke="#5b8a9a" strokeWidth="0.7" />
          <path d="M1 16L18 25L35 16L18 8Z" fill="#cfe6ee" stroke="#5b8a9a" strokeWidth="0.7" />
          <path d="M1 13L18 22L35 13L18 5Z" fill="#eef4f6" stroke="#5b8a9a" strokeWidth="0.7" />
          <path d="M1 10L10 4L21 1L35 9L18 18Z" fill="#3fd0b2" />
        </svg>
      </div>
      <div className="h-[70px] bg-white border-y border-[#c9ced4] pl-[4px] pt-[17px] relative">
        <Folder size="w-[36px] h-[32px]" />
        <div className="absolute left-[18px] top-[29px] w-[21px] h-[21px] rounded-full border border-[#5fb0ba] bg-[linear-gradient(#dff2f2_0%,#8ccbd2_45%,#f4a428_55%,#e8701c_100%)]" />
      </div>
    </div>
  );
}

function CubeDrawing() {
  return (
    <svg viewBox="240 600 600 680" className="absolute left-[240px] top-[313px] w-[600px] h-[680px]">
      <path d="M463 616L252 737L599 857L810 736Z" fill="#838383" stroke="#111" strokeWidth="1" />
      <path d="M252 737L599 857L602 1261L255 1141Z" fill="#5d5a54" stroke="#111" strokeWidth="1" />
      <path d="M599 857L810 736L813 1140L602 1261Z" fill="#b86e00" />
      <path d="M599 857L810 736L813 1140L602 1261Z" fill="none" stroke="#ff9c00" strokeWidth="2.6" />
      <g fill="none" stroke="#8c6b3a" strokeOpacity="0.3" strokeWidth="1">
        <path d="M370 947L512 866L695 927L552 1011Z" />
        <path d="M441 804L623 864L624 1072L442 1010Z" />
        <path d="M461 875L603 794L603 1001L462 1082Z" />
      </g>
      <path d="M532 938V800" stroke="#50507f" strokeWidth="2" />
      <path d="M532 778L526 806H538Z" fill="#7c7cb8" />
      <path d="M532 938L443 991" stroke="#8a4545" strokeWidth="1.6" />
      <path d="M423 1001L441 985L446 997Z" fill="#8f5a54" />
      <path d="M423 1001L429 997L430 1000Z" fill="#f01010" />
      <path d="M532 938L600 958" stroke="#3f6a3a" strokeWidth="1.6" />
      <path d="M600 958L648 975" stroke="#857a10" strokeWidth="1.6" />
      <path d="M672 986L647 973L648 984Z" fill="#8f8200" />
    </svg>
  );
}

const Badge = ({ pos, children }) => (
  <div className={`absolute ${pos} w-[41px] h-[41px] rounded-full bg-[#4d7dce] flex items-center justify-center text-white text-[30px] font-['Liberation_Sans',sans-serif]`}>
    {children}
  </div>
);

function Annotations() {
  return (
    <>
      <div className="absolute left-[1679px] top-[491px] w-[72px] h-[94px] border-[3px] border-[#ffa800]" />
      <div className="absolute left-[681px] top-[978px] w-[260px] h-[109px] border-[3px] border-[#ffa800]" />
      <div className="absolute left-[724px] top-[1008px] w-[182px] h-[49px] bg-[#f0f0f0] shadow-[3px_3px_0_#999] flex items-center">
        <div className="w-[62px] flex justify-center">
          <svg viewBox="0 0 26 24" className="w-[26px] h-[24px]"><path d="M1 7C6 5 10 3 14 1C19 2 18 8 20 12C21 16 23 16 26 17L14 23C8 22 9 14 7 11C5 9 3 9 1 7Z" fill="#27b6dc" stroke="#0b6f93" /></svg>
        </div>
        <div className="w-[58px] flex justify-center">
          <svg viewBox="0 0 30 26" className="w-[30px] h-[26px]"><path d="M1 8L16 1L29 6L14 13Z" fill="#55c4e0" /><path d="M1 8L14 13V25L1 20Z" fill="url(#t)" /><path d="M14 13L29 6V18L14 25Z" fill="url(#td)" /></svg>
        </div>
        <div className="w-[62px] flex justify-center">
          <svg viewBox="0 0 30 28" className="w-[30px] h-[28px]"><path d="M14 2L18 0L29 7V17L14 25V14Z" fill="#29a7cc" stroke="#0b6f93" strokeWidth="0.6" /><path d="M1 17L14 10L22 16L10 26L2 22Z" fill="url(#cy)" stroke="#0b6f93" strokeWidth="0.6" /><ellipse cx="11" cy="18" rx="5" ry="3" fill="#909090" stroke="#0b6f93" /><path d="M1 19L12 27L29 17V19L12 28L1 22Z" fill="#06587a" /></svg>
        </div>
      </div>
      <svg viewBox="700 1130 420 70" className="absolute left-[700px] top-[1130px] w-[420px] h-[70px] drop-shadow-[2px_4px_2px_rgba(0,0,0,0.45)]">
        <path d="M1103 1145L742 1177" stroke="#f8a808" strokeWidth="8" strokeLinecap="round" />
        <path d="M713 1179L741 1163L744 1192Z" fill="#f8a808" />
      </svg>
      <Badge pos="left-[1691px] top-[592px]">1</Badge>
      <Badge pos="left-[1186px] top-[1155px]">2</Badge>
      <Badge pos="left-[870px] top-[1098px]">3</Badge>
    </>
  );
}

function ViewTools() {
  const Dd = ({ w }) => <Slot w={w}><Caret color="border-t-[#444]" /></Slot>;
  return (
    <div className="h-[34px] flex items-center">
      <Slot w="w-[19px]"><div className="-ml-[28px] w-[17px] h-[22px] bg-white border-2 border-[#999] flex items-center justify-center"><div className="w-[3px] h-[3px] bg-[#777]" /></div></Slot>
      <Slot w="w-[27px]"><Small><circle cx="9" cy="4" r="3" fill="#5aa0e0" /><path d="M9 7V11" stroke="#777" strokeWidth="2" /><path d="M4 14L22 9V11L4 16ZM4 17L22 12V14L4 19ZM4 20L22 15V17L4 22Z" fill="#3db84a" /><path d="M22 8V20" stroke="#e0a040" /></Small></Slot>
      <Dd w="w-[28px]" />
      <Slot w="w-[31px]"><Small><path d="M12 16L20 4L23 6L15 19Z" fill="#d31c24" /><path d="M12 16L15 19L11 23L8 20Z" fill="#f3e3b0" stroke="#b98" strokeWidth="0.6" /></Small></Slot>
      <Slot w="w-[34px]"><Small><path d="M2 10L12 5L22 10L12 15Z" fill="#ffd93a" /><path d="M2 10L12 15V24L2 19Z" fill="#a9dcec" /><path d="M12 15L22 10V19L12 24Z" fill="#18a0c8" /><path d="M12 1V12" stroke="#3db84a" strokeWidth="1.2" /></Small></Slot>
      <Slot w="w-[31px]"><Small><path d="M2 7L13 2L23 7L12 12Z" fill="#6accE6" /><path d="M2 7L12 12V24L2 18Z" fill="url(#t)" /><path d="M12 12L23 7V18L12 24Z" fill="url(#td)" /></Small></Slot>
      <Dd w="w-[26px]" />
      <Slot w="w-[26px]"><Small><path d="M2 7L13 2L23 7L12 12ZM2 7L12 12V24L2 18ZM12 12L23 7V18L12 24Z" fill="#fff" stroke="#8aa" strokeWidth="0.8" /></Small></Slot>
      <Dd w="w-[27px]" />
      <Slot w="w-[26px]"><Small><path d="M7 1L19 3L24 13L17 23L6 22L1 11Z" fill="#f6a81e" stroke="#b5401a" strokeWidth="0.9" /><path d="M7 1L11 12L19 3M1 11H11L24 13M11 12L6 22M11 12L17 23" fill="none" stroke="#b5401a" strokeWidth="0.7" /></Small></Slot>
      <Dd w="w-[26px]" />
      <Slot w="w-[27px]"><Small><rect x="1" y="1" width="22" height="22" fill="#e9f5f8" stroke="#1a8fb2" strokeWidth="1.5" /><circle cx="11" cy="10" r="7.5" fill="#fbf4c8" stroke="#c89c20" strokeWidth="2" /><path d="M8 6H14M8 9H14M8 12H14" stroke="#888" /><path d="M16 16L20 21" stroke="#1a6f92" strokeWidth="2.5" /></Small></Slot>
      <Dd w="w-[27px]" />
      <Slot w="w-[26px]"><Small><path d="M12 2V22M2 12H22" stroke="#d31c24" strokeWidth="1.6" /><circle cx="12" cy="12" r="7" fill="none" stroke="#d31c24" strokeWidth="1.6" strokeDasharray="8 3" /><circle cx="12" cy="12" r="2.5" fill="#1a6f92" /></Small></Slot>
      <Dd w="w-[26px]" />
      <Slot w="w-[32px]"><Small><rect x="1" y="1" width="22" height="22" fill="#fff" stroke="#5b8a9a" /><path d="M14 4C18 4 20 8 19 12" fill="none" stroke="#4aa0c0" strokeDasharray="2 1.5" /><rect x="5" y="15" width="5" height="5" fill="#1a7fa5" /></Small></Slot>
      <Slot w="w-[30px]"><Small><path d="M3 1V17M21 1V17" stroke="#1a8fb2" strokeWidth="2" /><path d="M6 7H18" stroke="#1a8fb2" strokeWidth="2" /><path d="M3 22H21" stroke="#d31c24" strokeWidth="2.4" /><path d="M2 22L6 19V25ZM22 22L18 19V25Z" fill="#d31c24" /></Small></Slot>
      <Dd w="w-[27px]" />
      <Slot w="w-[26px]"><Small><rect x="0" y="0" width="24" height="19" fill="#eee" stroke="#666" strokeWidth="1.4" /><rect x="2" y="2" width="20" height="15" fill="#5a6d94" /><path d="M7 22H17V24H7Z" fill="#888" /></Small></Slot>
      <Dd w="w-[27px]" />
      <Slot w="w-[31px]"><div className="w-[25px] h-[17px] bg-black" /></Slot>
      <Slot w="w-[35px]"><div className="w-[25px] h-[25px] bg-[#bde3f2] border border-[#222]" /></Slot>
      <Slot w="w-[30px]"><Small><path d="M1 16L12 22L23 16L12 11Z" fill="#e8f2f5" stroke="#5b8a9a" strokeWidth="0.6" /><path d="M1 13L12 19L23 13L12 8Z" fill="#e8f2f5" stroke="#5b8a9a" strokeWidth="0.6" /><path d="M1 9L8 3L23 9L12 15Z" fill="#3fd0b2" /></Small></Slot>
      <Dd w="w-[20px]" />
      <div className="ml-[4px] w-[173px] h-[30px] bg-[#f0f0f0] border border-[#dedede] flex items-center shrink-0 -mt-[1px]">
        <svg viewBox="0 0 40 20" className="ml-[13px] w-[40px] h-[20px]">
          <path d="M6 13C2 9 2 3 7 2C12 3 12 9 8 13V16H6Z" fill="#fff" stroke="#aaa" />
          <circle cx="24" cy="10" r="6.5" fill="#d8d8d8" stroke="#999" />
        </svg>
        <span className="ml-[3px] text-[18px] text-[#9a9a9a] whitespace-nowrap">图层0000</span>
        <div className="ml-[14px] h-full w-px bg-[#e2e2e2]" />
        <div className="ml-[9px] flex"><Caret color="border-t-[#aaa]" /></div>
      </div>
    </div>
  );
}

export default function App() {
  return (
    <div className="relative w-[1755px] h-[1479px] overflow-hidden bg-[#e1e5e9] flex flex-col font-['Roboto','Noto_Sans_CJK_SC',sans-serif]">
      <Defs />
      <TitleBar />
      <TabRow />
      <Ribbon />
      <QuickBar />
      <div className="h-[29px] flex items-center text-[18px] text-[#666]">
        <svg viewBox="0 0 14 16" className="ml-[1070px] w-[14px] h-[16px]">
          <path d="M2 2H12V4H2Z" fill="#999" />
          <path d="M2 7H12L7 14Z" fill="#888" />
        </svg>
        <span className="ml-[17px]">外观库</span>
        <div className="ml-[547px] w-[13px] h-[11px] border-2 border-[#a8a8a8] flex items-center justify-center"><div className="w-[5px] h-px bg-[#999]" /></div>
        <div className="ml-[15px]"><XGlyph /></div>
      </div>
      <div className="flex-1 flex min-h-0">
        <div className="w-[1093px] shrink-0 relative bg-[linear-gradient(#fdfdfd,#9c9c9c)] border-t border-[#c3c8ce]">
          <ViewTools />
          <div className="text-[18.5px] text-black leading-[24px] whitespace-nowrap -ml-[1px] -mt-[8px]">下一个有效的过滤器设置.</div>
          <CubeDrawing />
        </div>
        <Panel />
        <SideTabs />
      </div>
      <Annotations />
    </div>
  );
}
